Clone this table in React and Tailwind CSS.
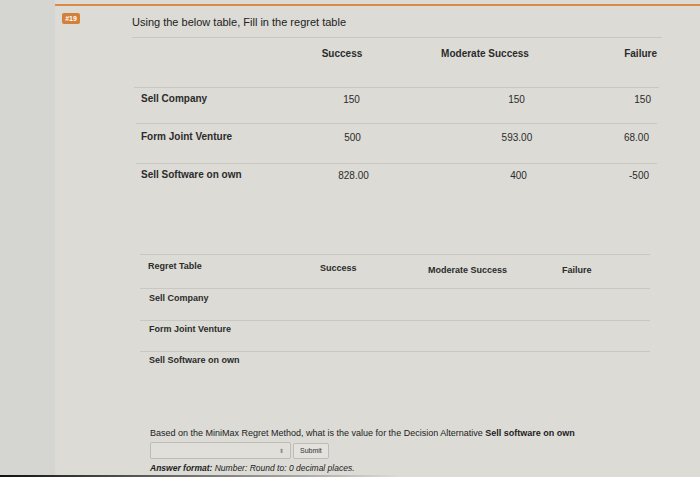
import React from "react";

const rows1 = [
  { label: "Sell Company", s: "150", m: "150", f: "150", h: "h-[36px]", pt: "pt-[5px]" },
  { label: "Form Joint Venture", s: "500", m: "593.00", f: "68.00", h: "h-[40px]", pt: "pt-[7px]" },
  { label: "Sell Software on own", s: "828.00", m: "400", f: "-500", h: "h-[40px]", pt: "pt-[5px]" },
];

const rows2 = [
  { label: "Sell Company", h: "h-[32px]", pt: "pt-[4px]" },
  { label: "Form Joint Venture", h: "h-[31px]", pt: "pt-[3px]" },
  { label: "Sell Software on own", h: "h-[31px]", pt: "pt-[3px]" },
];

const App = () => {
  return (
    <div className="w-[700px] h-[477px] overflow-hidden flex bg-[#dcdbd6] text-[#2b2b2b] font-['Liberation_Sans',Arial,sans-serif]">
      {/* left margin of the screen */}
      <div className="w-[55px] shrink-0 bg-[#d5d5d2]"></div>
      <div className="flex-1 flex flex-col relative">
        <div className="mt-[4px] h-[2px] bg-[#d98a4a]"></div>
        <div className="flex">
          {/* question badge */}
          <div className="w-[77px] shrink-0 pl-[7px] pt-[7px]">
            <div className="w-[18px] h-[11px] rounded-[2px] bg-[#d4803a] text-white text-[7px] font-bold leading-[11px] text-center">
              #19
            </div>
          </div>
          <div className="flex-1 flex flex-col">
            <p className="pt-[10px] text-[11px] leading-[13px] text-[#222]">
              Using the below table, Fill in the regret table
            </p>
            <div className="mt-[8px] w-[530px] border-t border-[#c8c7c2]">
              {/* payoff table */}
              <div className="flex h-[49px] pt-[10px] text-[10px] font-bold leading-[12px]">
                <div className="w-[158px]"></div>
                <div className="w-[104px] text-center">Success</div>
                <div className="w-[182px] text-center">Moderate Success</div>
                <div className="flex-1 pr-[5px] text-right">Failure</div>
              </div>
              {rows1.map((r, i) => (
                <div
                  key={r.label}
                  className={`flex ${r.h} ${r.pt} text-[10px] leading-[12px] ${i === 0 ? "ml-[2px] w-[525px]" : "ml-[4px] w-[521px]"} border-t border-[#c8c7c2]`}
                >
                  <div className={`w-[160px] font-bold ${i === 0 ? "pl-[7px]" : "pl-[5px]"}`}>{r.label}</div>
                  <div className="w-[115px] pt-[1px] text-center">{r.s}</div>
                  <div className="w-[215px] pt-[1px] text-center">{r.m}</div>
                  <div className="flex-1 pt-[1px] text-right pr-[8px]">{r.f}</div>
                </div>
              ))}
            </div>

            {/* regret table */}
            <div className="mt-[51px] ml-[8px] w-[510px] border-t border-[#c8c7c2] text-[9px] font-bold leading-[11px]">
              <div className="flex h-[33px] pt-[6px]">
                <div className="w-[180px] pl-[8px]">Regret Table</div>
                <div className="w-[108px] pt-[2px]">Success</div>
                <div className="w-[134px] pt-[4px]">Moderate Success</div>
                <div className="pt-[4px]">Failure</div>
              </div>
              {rows2.map((r) => (
                <div key={r.label} className={`${r.h} ${r.pt} pl-[9px] border-t border-[#c8c7c2]`}>
                  {r.label}
                </div>
              ))}
            </div>

            {/* question */}
            <div className="mt-[46px] ml-[18px] text-[9px] leading-[11px] text-[#222]">
              <p>
                Based on the MiniMax Regret Method, what is the value for the Decision Alternative{" "}
                <span className="font-bold">Sell software on own</span>
              </p>
              <div className="mt-[3px] flex items-center gap-[2px]">
                <div className="w-[141px] h-[17px] rounded-[2px] border border-[#bdbcb7] bg-[#e0dfda] flex items-center justify-end pr-[6px]">
                  <span className="text-[6px] leading-[6px] text-[#888]">⬍</span>
                </div>
                <button className="h-[16px] px-[6px] rounded-[2px] border border-[#bdbcb7] bg-[#e3e2dd] text-[7px] text-[#333]">
                  Submit
                </button>
              </div>
              <p className="mt-[4px] italic text-[8.5px]">
                <span className="font-bold">Answer format:</span> Number: Round to: 0 decimal places.
              </p>
            </div>
          </div>
        </div>
        <div className="absolute left-[-55px] bottom-0 w-[400px] h-[2px] bg-gradient-to-r from-[#111] to-transparent"></div>
      </div>
    </div>
  );
};

export default App;
